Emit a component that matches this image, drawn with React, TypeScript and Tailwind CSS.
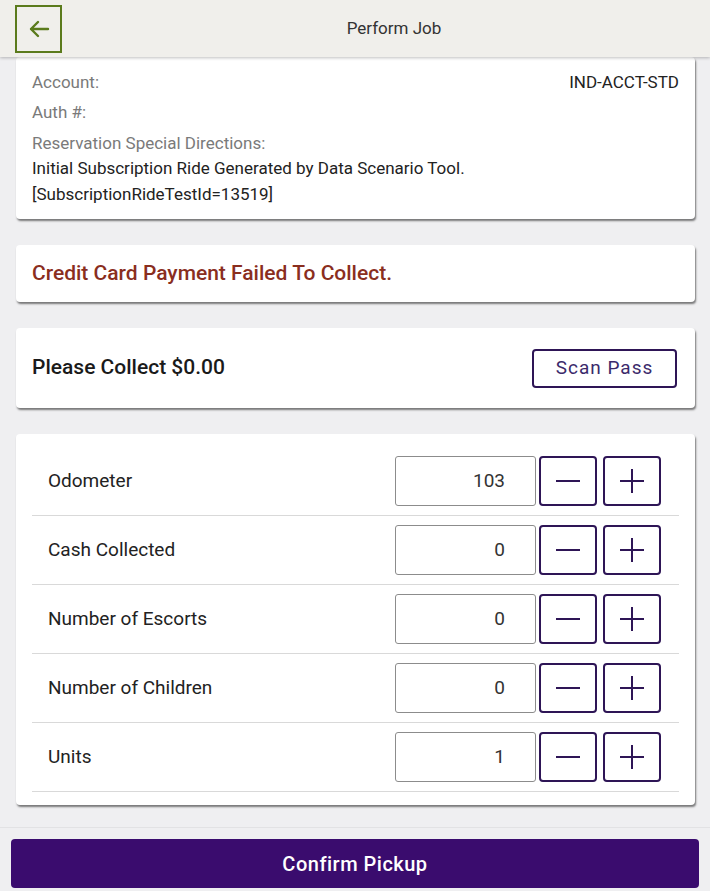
import React from 'react';

const FONT = { fontFamily: 'Roboto, "Noto Sans", sans-serif' };

interface CounterRowProps {
  label: string;
  value: number;
}

const MinusIcon = () => (
  <svg width="26" height="26" viewBox="0 0 26 26">
    <path d="M1 13h24" stroke="#2e1556" strokeWidth="2" />
  </svg>
);

const PlusIcon = () => (
  <svg width="26" height="26" viewBox="0 0 26 26">
    <path d="M1 13h24M13 1v24" stroke="#2e1556" strokeWidth="2" />
  </svg>
);

const CounterRow: React.FC<CounterRowProps> = ({ label, value }) => (
  <div className="flex h-[69px] items-center border-b border-[#d9d9d9] pl-4 pr-[18px]">
    <span className="flex-1 text-[19px] text-[#222]">{label}</span>
    <div className="flex h-[50px] w-[141px] items-center justify-end rounded-[3px] border border-[#8c8c8c] pr-[30px] text-[19px] text-[#333]">
      {value}
    </div>
    <button className="ml-[3px] flex h-[50px] w-[58px] items-center justify-center rounded-[4px] border-2 border-[#2e1556]">
      <MinusIcon />
    </button>
    <button className="ml-[6px] flex h-[50px] w-[58px] items-center justify-center rounded-[4px] border-2 border-[#2e1556]">
      <PlusIcon />
    </button>
  </div>
);

const card = 'rounded-[4px] bg-white shadow-[1px_2px_2px_rgba(0,0,0,0.5)]';

export default function App() {
  const counters = [
    { label: 'Odometer', value: 103 },
    { label: 'Cash Collected', value: 0 },
    { label: 'Number of Escorts', value: 0 },
    { label: 'Number of Children', value: 0 },
    { label: 'Units', value: 1 },
  ];

  return (
    <div className="flex h-[891px] flex-col overflow-hidden bg-[#efeff1]" style={FONT}>
      <header className="relative z-10 flex h-[57px] shrink-0 items-center bg-[#f0efeb] pl-[15px] shadow-[0_1px_3px_rgba(0,0,0,0.25)]">
        <button className="flex h-[48px] w-[47px] items-center justify-center border-2 border-[#5b7b1c]">
          <svg width="22" height="22" viewBox="0 0 22 22" fill="none">
            <path d="M20 11H3M10 4l-7 7 7 7" stroke="#5b7b1c" strokeWidth="2.4" strokeLinecap="round" strokeLinejoin="round" />
          </svg>
        </button>
        <h1 className="flex-1 pl-4 text-center text-[17px] text-[#333]">Perform Job</h1>
      </header>

      <main className="flex-1 overflow-hidden pl-4 pr-[15px]">
        <section className={`${card} px-4 pt-[13px] pb-3 text-[17px]`}>
          <div className="flex justify-between leading-6">
            <span className="text-[#7a7a7a]">Account:</span>
            <span className="text-[#222]">IND-ACCT-STD</span>
          </div>
          <div className="mt-1.5 leading-6 text-[#7a7a7a]">Auth #:</div>
          <div className="mt-[7px] leading-6 text-[#7a7a7a]">Reservation Special Directions:</div>
          <p className="leading-[26px] text-[#222]">
            Initial Subscription Ride Generated by Data Scenario Tool.
            <br />
            [SubscriptionRideTestId=13519]
          </p>
        </section>

        <section className={`${card} mt-[26px] flex h-[57px] items-center px-4`}>
          <span className="text-[21px] font-medium text-[#8a2e1e]">Credit Card Payment Failed To Collect.</span>
        </section>

        <section className={`${card} mt-[26px] flex h-[80px] items-center justify-between pl-4 pr-[18px]`}>
          <span className="text-[21px] font-medium text-[#1a1a1a]">Please Collect $0.00</span>
          <button className="h-[39px] w-[145px] rounded-[4px] border-2 border-[#2e1556] text-[19px] tracking-[1px] text-[#3b2a6b]">
            Scan Pass
          </button>
        </section>

        <section className={`${card} mt-[26px] px-4 py-[13px]`}>
          {counters.map((c) => (
            <CounterRow key={c.label} label={c.label} value={c.value} />
          ))}
        </section>
      </main>

      <footer className="h-[64px] shrink-0 border-t border-[#e2e2e4] bg-[#efeff1] px-[11px] pt-[11px]">
        <button className="h-[49px] w-full rounded-[4px] bg-[#3a0c6e] text-[20px] font-medium tracking-[0.5px] text-white">
          Confirm Pickup
        </button>
      </footer>
    </div>
  );
}
